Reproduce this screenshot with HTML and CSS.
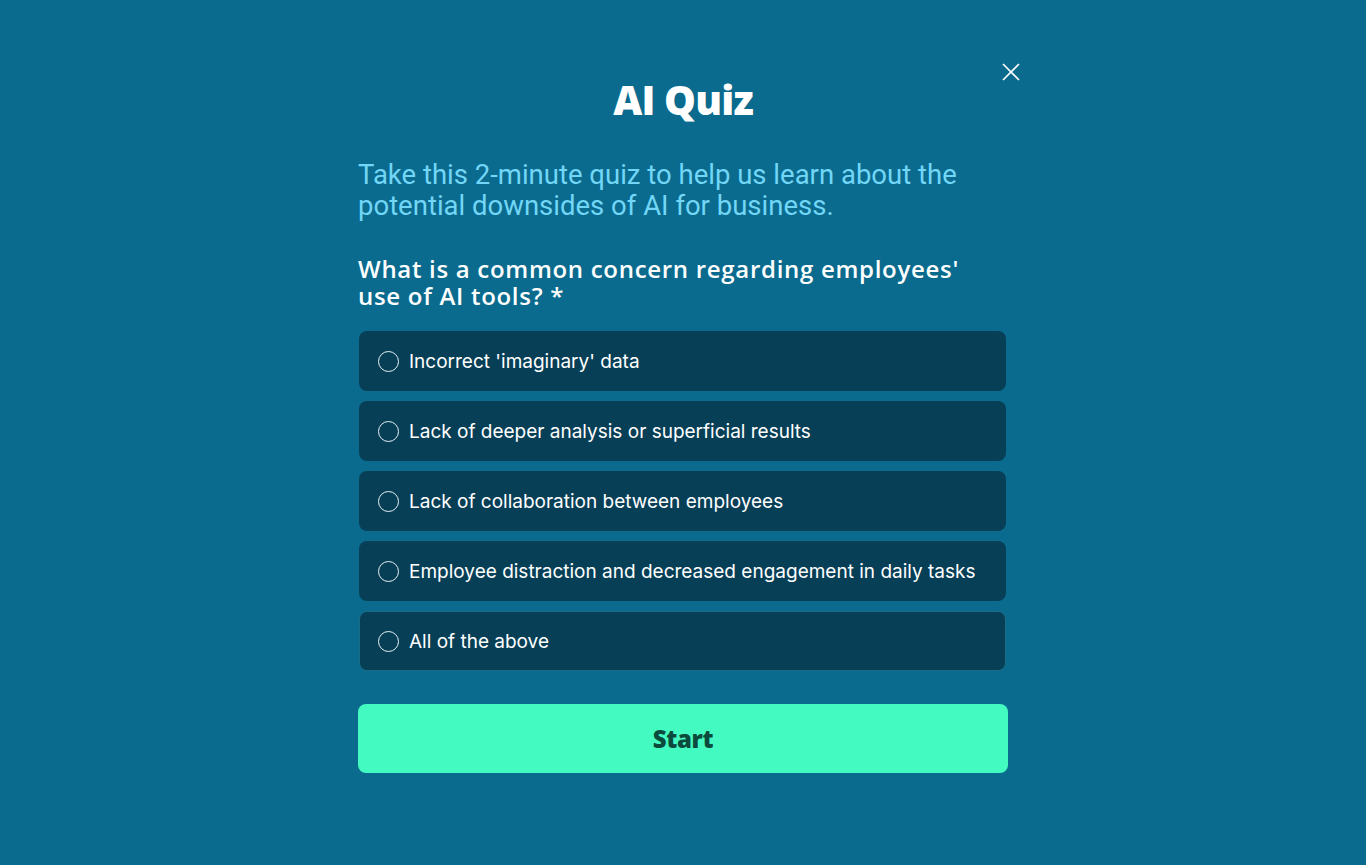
FILE: index.html
```html
<!DOCTYPE html>
<html lang="en">
<head>
<meta charset="utf-8">
<title>AI Quiz</title>
<link rel="stylesheet" href="styles.css">
</head>
<body>
<div class="page">
  <div class="quiz">
    <button class="close" aria-label="Close">
      <svg width="18" height="18" viewBox="0 0 18 18"><path d="M1 1L17 17M17 1L1 17" stroke="#fff" stroke-width="1.6" fill="none"/></svg>
    </button>
    <h1 class="title">AI Quiz</h1>
    <p class="intro">Take this 2&#8209;minute quiz to help us learn about the potential downsides of AI for business.</p>
    <h2 class="question">What is a common concern regarding employees' use of AI tools? *</h2>
    <div class="options">
      <label class="option"><span class="radio"></span><span class="label">Incorrect 'imaginary' data</span></label>
      <label class="option"><span class="radio"></span><span class="label">Lack of deeper analysis or superficial results</span></label>
      <label class="option"><span class="radio"></span><span class="label">Lack of collaboration between employees</span></label>
      <label class="option"><span class="radio"></span><span class="label">Employee distraction and decreased engagement in daily tasks</span></label>
      <label class="option option-focus"><span class="radio"></span><span class="label">All of the above</span></label>
    </div>
    <button class="start">Start</button>
  </div>
</div>
</body>
</html>
```
FILE: styles.css
```css
html, body {
  margin: 0;
  padding: 0;
}
body {
  background: #0a6b8e;
  font-family: "Inter", "Liberation Sans", sans-serif;
  color: #fff;
}
.page {
  min-height: 865px;
  display: flex;
  justify-content: center;
}
.quiz {
  position: relative;
  width: 650px;
  padding-top: 74px;
  display: flex;
  flex-direction: column;
}
.close {
  position: absolute;
  top: 63px;
  right: -12px;
  background: none;
  border: 0;
  padding: 0;
  width: 18px;
  height: 18px;
  cursor: pointer;
}
.title {
  margin: 0;
  text-align: center;
  font-family: "Open Sans", sans-serif;
  font-weight: 800;
  font-size: 40px;
  line-height: 52px;
  letter-spacing: -0.8px;
}
.intro {
  margin: 33px 0 0;
  color: #72d6f7;
  font-family: "Roboto", sans-serif;
  font-weight: 400;
  font-size: 27.5px;
  line-height: 31px;
  letter-spacing: 0;
}
.question {
  margin: 34px 0 0;
  max-width: 625px;
  font-family: "Open Sans", sans-serif;
  font-weight: 600;
  font-size: 24px;
  line-height: 27px;
  letter-spacing: 0.7px;
}
.options {
  margin-top: 22px;
  display: flex;
  flex-direction: column;
  gap: 10px;
  padding: 0 2px 0 1px;
}
.option {
  height: 60px;
  box-sizing: border-box;
  background: #073f57;
  border-radius: 8px;
  display: flex;
  align-items: center;
  padding-left: 18px;
  gap: 10px;
  border: 1px solid transparent;
}
.option-focus {
  border-color: #1b6a86;
}
.radio {
  width: 19px;
  height: 19px;
  border: 1.3px solid #e8f2f6;
  border-radius: 50%;
  flex: none;
}
.label {
  font-size: 19px;
  font-weight: 400;
}
.start {
  margin-top: 33px;
  height: 69px;
  border: 0;
  border-radius: 8px;
  background: #43fbc0;
  color: #0b4a3c;
  font-family: "Open Sans", sans-serif;
  font-weight: 800;
  font-size: 24px;
  letter-spacing: -0.3px;
  cursor: pointer;
}
```
